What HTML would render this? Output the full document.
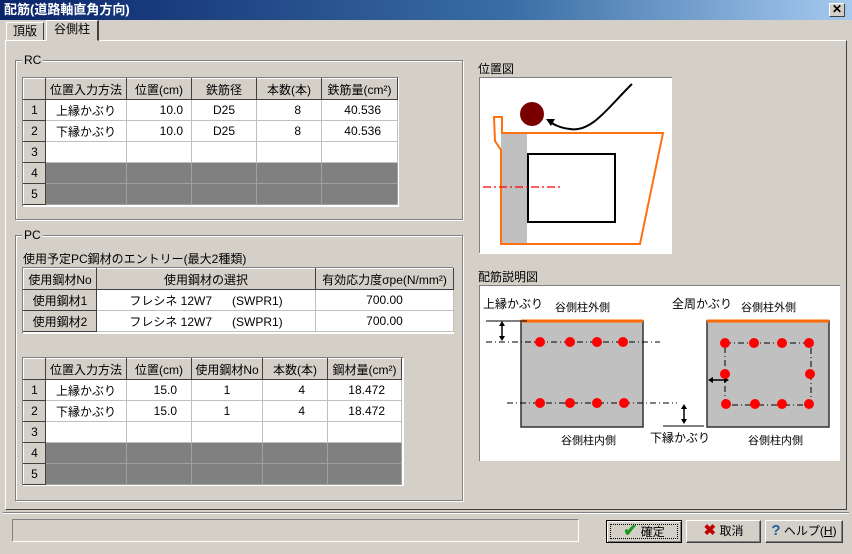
<!DOCTYPE html>
<html><head><meta charset="utf-8"><style>
*{margin:0;padding:0;box-sizing:border-box}
body{width:852px;height:554px;background:#d4d0c8;font-family:"Liberation Sans","Noto Sans CJK JP",sans-serif;font-size:12px;color:#000;position:relative;overflow:hidden}
.a{position:absolute}
.title{left:0;top:0;width:852px;height:20px;background:linear-gradient(90deg,#0a246a 0%,#3a6ea5 60%,#a6caf0 100%);color:#fff;font-weight:bold;font-size:13px;line-height:20px;padding-left:4px}
.xb{left:829px;top:3px;width:16px;height:14px;background:#d4d0c8;border:1px solid;border-color:#fff #404040 #404040 #fff;font-size:12px;line-height:11px;text-align:center;color:#000;font-weight:bold}
.panel{left:5px;top:40px;width:842px;height:470px;border:1px solid;border-color:#fff #404040 #404040 #fff}
.tab{height:19px;border:1px solid;border-bottom:none;border-color:#fff #404040 #404040 #fff;line-height:17px;padding:0 6px;background:#d4d0c8}
.grp{border:1px solid #808080;box-shadow:1px 1px 0 #fff inset,1px 1px 0 #fff}
.glabel{background:#d4d0c8;padding:0 2px;line-height:12px}
table{border-collapse:collapse;position:absolute;background:#fff;table-layout:fixed}
td{border:1px solid #c0c0c0;height:21px;text-align:center;padding:0;white-space:nowrap;overflow:hidden}
td.h{background:#d4d0c8;border:1px solid;border-color:#fff #404040 #404040 #fff}
td.g{background:#808080;border-color:#a0a0a0}
td.r{text-align:right;padding-right:8px}
.tw{border:1px solid;border-color:#808080 #fff #fff #808080;position:absolute;background:#fff}
.btn{border:1px solid;border-color:#fff #404040 #404040 #fff;box-shadow:inset -1px -1px 0 #808080;text-align:center;line-height:20px;font-size:12px;height:23px;top:520px}
</style></head><body>
<div class="a title">配筋(道路軸直角方向)</div>
<div class="a xb">✕</div>
<div class="a panel"></div>
<div class="a tab" style="left:6px;top:22px;height:18px">頂版</div>
<div class="a tab" style="left:46px;top:20px;height:21px;border-bottom:1px solid #d4d0c8;background:#d4d0c8;padding:0 7px;border-right:2px solid #404040">谷側柱</div>

<div class="a grp" style="left:15px;top:60px;width:448px;height:160px"></div>
<div class="a glabel" style="left:22px;top:54px">RC</div>
<div class="tw" style="left:22px;top:77px;width:377px;height:130px"></div>
<table style="left:23px;top:78px;width:374px">
<col style="width:22px"><col style="width:81px"><col style="width:65px"><col style="width:65px"><col style="width:65px"><col style="width:76px">
<tr><td class="h"></td><td class="h">位置入力方法</td><td class="h">位置(cm)</td><td class="h">鉄筋径</td><td class="h">本数(本)</td><td class="h">鉄筋量(cm²)</td></tr>
<tr><td class="h">1</td><td>上縁かぶり</td><td class="r">10.0</td><td>D25</td><td class="r" style="padding-right:20px">8</td><td class="r" style="padding-right:16px">40.536</td></tr>
<tr><td class="h">2</td><td>下縁かぶり</td><td class="r">10.0</td><td>D25</td><td class="r" style="padding-right:20px">8</td><td class="r" style="padding-right:16px">40.536</td></tr>
<tr><td class="h">3</td><td></td><td></td><td></td><td></td><td></td></tr>
<tr><td class="h">4</td><td class="g"></td><td class="g"></td><td class="g"></td><td class="g"></td><td class="g"></td></tr>
<tr><td class="h">5</td><td class="g"></td><td class="g"></td><td class="g"></td><td class="g"></td><td class="g"></td></tr>
</table>

<div class="a grp" style="left:15px;top:235px;width:448px;height:266px"></div>
<div class="a glabel" style="left:22px;top:229px">PC</div>
<div class="a" style="left:23px;top:250px">使用予定PC鋼材のエントリー(最大2種類)</div>
<div class="tw" style="left:22px;top:267px;width:432px;height:67px"></div>
<table style="left:23px;top:268px;width:430px">
<col style="width:73px"><col style="width:219px"><col style="width:138px">
<tr><td class="h">使用鋼材No</td><td class="h">使用鋼材の選択</td><td class="h">有効応力度σpe(N/mm²)</td></tr>
<tr><td class="h">使用鋼材1</td><td>フレシネ 12W7&nbsp;&nbsp;&nbsp;&nbsp;&nbsp;&nbsp;(SWPR1)</td><td>700.00</td></tr>
<tr><td class="h">使用鋼材2</td><td>フレシネ 12W7&nbsp;&nbsp;&nbsp;&nbsp;&nbsp;&nbsp;(SWPR1)</td><td>700.00</td></tr>
</table>
<div class="tw" style="left:22px;top:357px;width:382px;height:129px"></div>
<table style="left:23px;top:358px;width:378px">
<col style="width:22px"><col style="width:81px"><col style="width:65px"><col style="width:71px"><col style="width:65px"><col style="width:74px">
<tr><td class="h"></td><td class="h">位置入力方法</td><td class="h">位置(cm)</td><td class="h">使用鋼材No</td><td class="h">本数(本)</td><td class="h">鋼材量(cm²)</td></tr>
<tr><td class="h">1</td><td>上縁かぶり</td><td class="r" style="padding-right:14px">15.0</td><td>1</td><td class="r" style="padding-right:22px">4</td><td class="r" style="padding-right:16px">18.472</td></tr>
<tr><td class="h">2</td><td>下縁かぶり</td><td class="r" style="padding-right:14px">15.0</td><td>1</td><td class="r" style="padding-right:22px">4</td><td class="r" style="padding-right:16px">18.472</td></tr>
<tr><td class="h">3</td><td></td><td></td><td></td><td></td><td></td></tr>
<tr><td class="h">4</td><td class="g"></td><td class="g"></td><td class="g"></td><td class="g"></td><td class="g"></td></tr>
<tr><td class="h">5</td><td class="g"></td><td class="g"></td><td class="g"></td><td class="g"></td><td class="g"></td></tr>
</table>

<div class="a" style="left:478px;top:60px">位置図</div>
<svg class="a" style="left:479px;top:77px" width="193" height="177" viewBox="479 77 193 177">
<rect x="479" y="77" width="193" height="177" fill="#fff"/>
<path d="M479.5 253V77.5H672" fill="none" stroke="#808080"/>
<rect x="501" y="133" width="26" height="111" fill="#c0c0c0"/>
<path d="M494 117H502V133H663L640 244H501V150L495 141Z" fill="none" stroke="#ff7010" stroke-width="2"/>
<rect x="528" y="154" width="87" height="68" fill="none" stroke="#000" stroke-width="2"/>
<path d="M483 187H560" stroke="#f00" stroke-width="1.3" stroke-dasharray="8,3,2,3"/>
<circle cx="532" cy="114" r="12" fill="#7a0000"/>
<path d="M632 84C610 105 592 133 570 129C560 128 552 124 548 120" fill="none" stroke="#000" stroke-width="2"/>
<path d="M546 119L555 119L551 126Z" fill="#000"/>
</svg>

<div class="a" style="left:478px;top:268px">配筋説明図</div>
<svg class="a" style="left:479px;top:285px" width="361" height="176" viewBox="479 285 361 176" font-family="Liberation Sans,Noto Sans CJK JP,sans-serif" font-size="11">
<rect x="479" y="285" width="361" height="176" fill="#fff"/>
<path d="M479.5 461V285.5H840" fill="none" stroke="#808080"/>
<rect x="521" y="321" width="122" height="106" fill="#c0c0c0" stroke="#333" stroke-width="1.5"/>
<path d="M521 321H643" stroke="#ff6a00" stroke-width="3"/>
<rect x="707" y="321" width="122" height="106" fill="#c0c0c0" stroke="#333" stroke-width="1.5"/>
<path d="M707 321H829" stroke="#ff6a00" stroke-width="3"/>
<g stroke="#000" stroke-dasharray="6,3,1,3" fill="none">
<path d="M486 342H660M507 403H677"/>
<rect x="725" y="343" width="86" height="62"/>
</g>
<path d="M486 321H527M663 426H704" stroke="#000"/>
<g stroke="#000" stroke-width="1.5"><path d="M502 324V338M684 407V421M711 380H726"/></g>
<g fill="#000"><path d="M502 321l-3 5h6zM502 341l-3-5h6zM684 404l-3 5h6zM684 424l-3-5h6zM708 380l5-3v6zM729 380l-5-3v6z"/></g>
<g fill="#f00">
<circle cx="540" cy="342" r="5"/><circle cx="570" cy="342" r="5"/><circle cx="597" cy="342" r="5"/><circle cx="623" cy="342" r="5"/>
<circle cx="540" cy="403" r="5"/><circle cx="570" cy="403" r="5"/><circle cx="597" cy="403" r="5"/><circle cx="624" cy="403" r="5"/>
<circle cx="725" cy="343" r="5"/><circle cx="754" cy="343" r="5"/><circle cx="782" cy="343" r="5"/><circle cx="809" cy="343" r="5"/>
<circle cx="725" cy="374" r="5"/><circle cx="810" cy="374" r="5"/>
<circle cx="726" cy="404" r="5"/><circle cx="755" cy="404" r="5"/><circle cx="782" cy="404" r="5"/><circle cx="809" cy="404" r="5"/>
</g>
<text x="483" y="308" font-size="12">上縁かぶり</text>
<text x="555" y="311">谷側柱外側</text>
<text x="672" y="308" font-size="12">全周かぶり</text>
<text x="741" y="311">谷側柱外側</text>
<text x="561" y="444">谷側柱内側</text>
<text x="650" y="442" font-size="12">下縁かぶり</text>
<text x="748" y="444">谷側柱内側</text>
</svg>

<div class="a" style="left:3px;top:512px;width:846px;height:1px;background:#808080"></div>
<div class="a" style="left:3px;top:513px;width:846px;height:1px;background:#fff"></div>
<div class="a" style="left:12px;top:519px;width:567px;height:23px;border:1px solid;border-color:#808080 #fff #fff #808080"></div>
<div class="a btn" style="left:606px;width:76px;border:1px solid #000;box-shadow:inset 1px 1px 0 #fff,inset -1px -1px 0 #808080"><div style="position:absolute;left:3px;top:3px;right:3px;bottom:3px;border:1px dotted #000"></div><span style="color:#1a9a1a;font-size:17px;font-weight:bold">✔</span> 確定</div>
<div class="a btn" style="left:686px;width:75px"><span style="color:#c00000;font-size:15px;font-weight:bold">✖</span> 取消</div>
<div class="a btn" style="left:765px;width:78px"><span style="color:#2060a0;font-size:15px;font-weight:bold">?</span> ヘルプ(<u>H</u>)</div>
</body></html>
